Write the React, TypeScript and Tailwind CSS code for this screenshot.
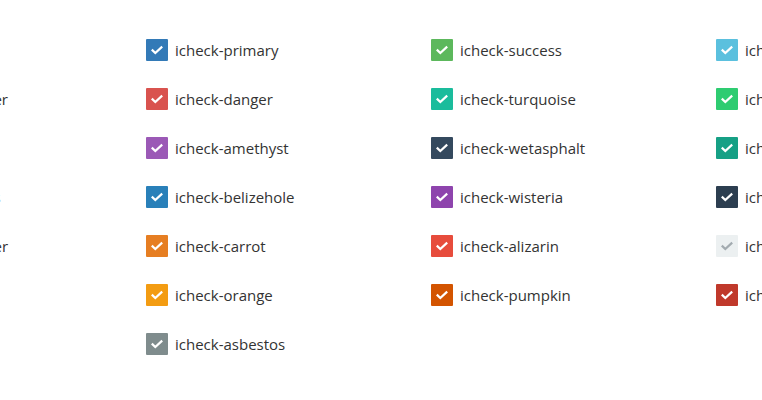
type Item = { label: string; color: string; tick?: string };

const columns: Item[][] = [
  [
    { label: 'icheck-warning', color: '#f0ad4e' },
    { label: 'icheck-peterriver', color: '#3498db' },
    { label: 'icheck-default', color: '#dddddd' },
    { label: 'icheck-nephritis', color: '#27ae60' },
    { label: 'icheck-sunflower', color: '#f1c40f' },
    { label: 'icheck-concrete', color: '#95a5a6' },
  ],
  [
    { label: 'icheck-primary', color: '#337ab7' },
    { label: 'icheck-danger', color: '#d9534f' },
    { label: 'icheck-amethyst', color: '#9b59b6' },
    { label: 'icheck-belizehole', color: '#2980b9' },
    { label: 'icheck-carrot', color: '#e67e22' },
    { label: 'icheck-orange', color: '#f39c12' },
    { label: 'icheck-asbestos', color: '#7f8c8d' },
  ],
  [
    { label: 'icheck-success', color: '#5cb85c' },
    { label: 'icheck-turquoise', color: '#1abc9c' },
    { label: 'icheck-wetasphalt', color: '#34495e' },
    { label: 'icheck-wisteria', color: '#8e44ad' },
    { label: 'icheck-alizarin', color: '#e74c3c' },
    { label: 'icheck-pumpkin', color: '#d35400' },
  ],
  [
    { label: 'icheck-info', color: '#5bc0de' },
    { label: 'icheck-emerland', color: '#2ecc71' },
    { label: 'icheck-greensea', color: '#16a085' },
    { label: 'icheck-midnightblue', color: '#2c3e50' },
    { label: 'icheck-clouds', color: '#ecf0f1', tick: '#a3abb0' },
    { label: 'icheck-pomegranate', color: '#c0392b' },
  ],
];

const Check = ({ item }: { item: Item }) => (
  <label className="flex items-center gap-[7px] h-[22px] whitespace-nowrap cursor-pointer">
    <span
      className="w-[22px] h-[22px] shrink-0 flex items-center justify-center rounded-[1px]"
      style={{ backgroundColor: item.color }}
    >
      <svg width="22" height="22" viewBox="0 0 22 22">
        <polyline
          points="5.8,10.6 9.3,14 16.2,7.6"
          fill="none"
          stroke={item.tick ?? '#ffffff'}
          strokeWidth="2.2"
        />
      </svg>
    </span>
    <span className="text-[15px] leading-[22px] text-[#333333]">{item.label}</span>
  </label>
);

export default function App() {
  return (
    <div
      className="w-[762px] h-[400px] overflow-hidden bg-white"
      style={{ fontFamily: '"Open Sans", "Noto Sans", sans-serif' }}
    >
      <div className="flex -ml-[139px] pt-[39px]">
        {columns.map((col, i) => (
          <div key={i} className="w-[285px] shrink-0 flex flex-col gap-[27px]">
            {col.map((item) => (
              <Check key={item.label} item={item} />
            ))}
          </div>
        ))}
      </div>
    </div>
  );
}
